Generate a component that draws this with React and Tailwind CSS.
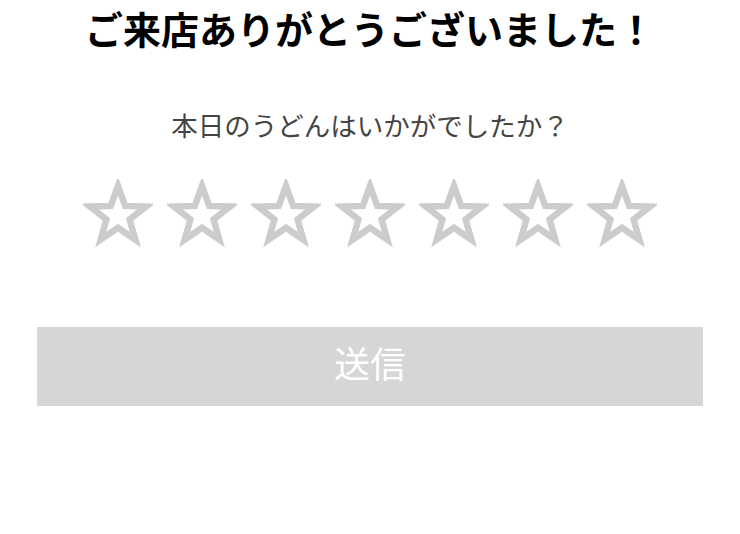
import { useState } from 'react';

const StarIcon = ({ filled }) => (
    <svg width="70" height="68" viewBox="0 0 70 68" fill={filled ? '#f5b301' : 'none'}>
        <path
            d="M35 7 L42.2 26.9 L63 27.6 L46.6 40.5 L52.3 60.6 L35 48.7 L17.7 60.6 L23.4 40.5 L7 27.6 L27.8 26.9 Z"
            stroke={filled ? '#f5b301' : '#cccccc'}
            strokeWidth="6.5"
            strokeLinejoin="miter"
        />
    </svg>
);

const App = () => {
    const [rating, setRating] = useState(0);
    const stars = [1, 2, 3, 4, 5, 6, 7];

    return (
        <div className="w-[740px] h-[534px] bg-white font-['Noto_Sans_CJK_JP',sans-serif]">
            <h1 className="pt-[2px] text-center text-[38px] leading-[52px] font-bold text-black">
                ご来店ありがとうございました！
            </h1>

            <p className="mt-[53px] text-center text-[26.5px] leading-[36px] text-[#444444]">
                本日のうどんはいかがでしたか？
            </p>

            {/* Rating */}
            <div className="mt-[36px] flex justify-center gap-[14px]">
                {stars.map((n) => (
                    <button key={n} onClick={() => setRating(n)} className="block">
                        <StarIcon filled={n <= rating} />
                    </button>
                ))}
            </div>

            <div className="mt-[80px] px-[37px]">
                <button className="w-full h-[79px] bg-[#d6d6d6] text-white text-[36px] leading-[70px] pb-[13px]">
                    送信
                </button>
            </div>
        </div>
    );
};

export default App;
